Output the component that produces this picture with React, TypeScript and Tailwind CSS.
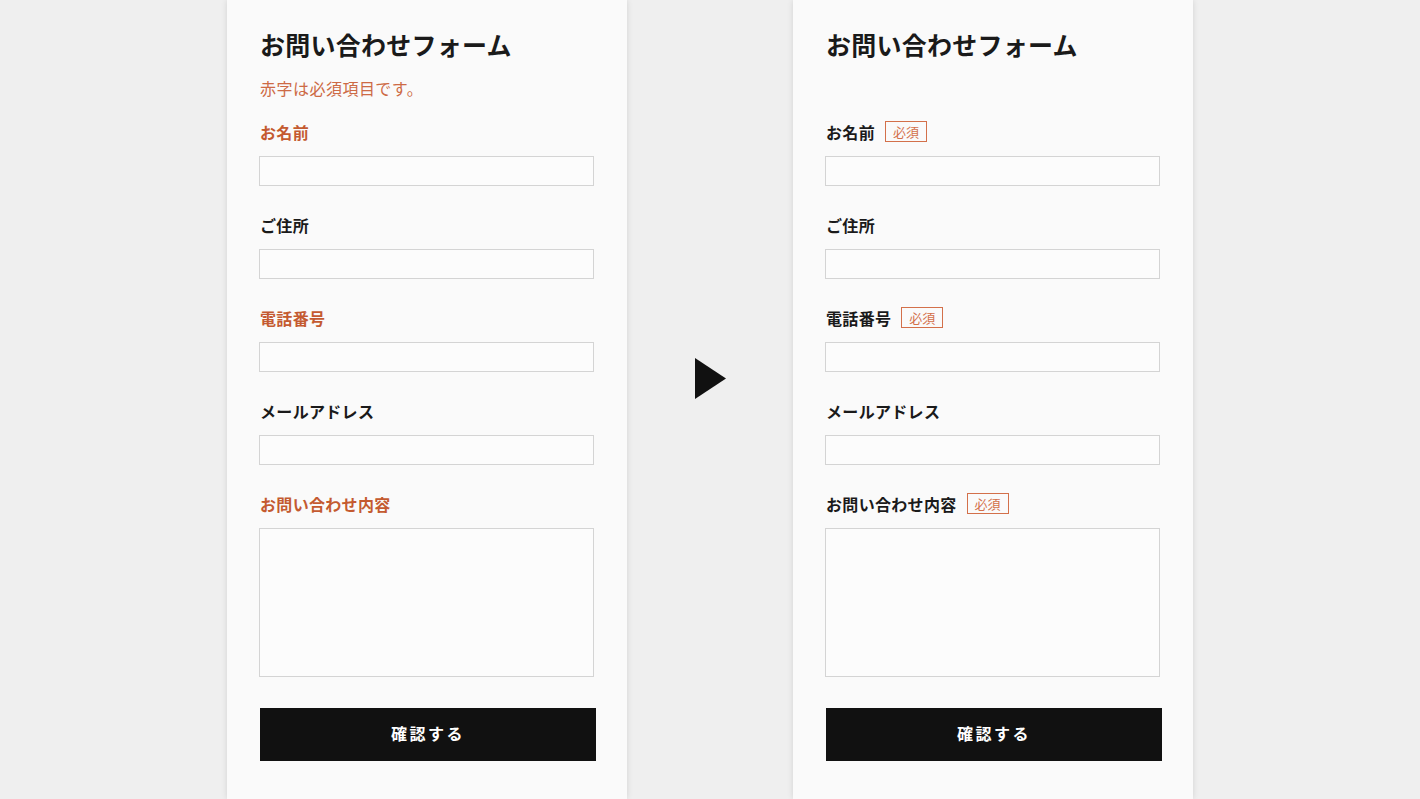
import React from 'react';

type Field = { label: string; required: boolean; multiline?: boolean };

const fields: Field[] = [
  { label: 'お名前', required: true },
  { label: 'ご住所', required: false },
  { label: '電話番号', required: true },
  { label: 'メールアドレス', required: false },
  { label: 'お問い合わせ内容', required: true, multiline: true },
];

function FormPanel({ variant }: { variant: 'color' | 'badge' }) {
  const isColor = variant === 'color';
  return (
    <div className="w-[400px] h-[799px] shrink-0 bg-[#fafafa] shadow-[0_0_6px_rgba(0,0,0,0.12)] pt-[27px] pl-[33px] pr-[31px]">
      <h1 className="text-[25px] leading-[34px] font-bold text-[#1a1a1a] tracking-[0.01em]">お問い合わせフォーム</h1>
      <p className={`mt-[15px] text-[16px] leading-[24px] tracking-[0.03em] text-[#cd6a45] ${isColor ? '' : 'invisible'}`}>
        赤字は必須項目です。
      </p>
      {fields.map((f, i) => (
        <div key={f.label} className={i === 0 ? 'mt-[20px]' : 'mt-[27px]'}>
          <div className="flex items-center h-[24px]">
            <span
              className={`text-[16px] leading-[24px] font-bold tracking-[0.02em] ${
                isColor && f.required ? 'text-[#c45a30]' : 'text-[#1a1a1a]'
              }`}
            >
              {f.label}
            </span>
            {!isColor && f.required && (
              <span className="ml-[10px] h-[21px] px-[7px] flex items-center border border-[#d3704a] text-[13px] leading-none text-[#d3704a] -mt-[2px]">
                必須
              </span>
            )}
          </div>
          {f.multiline ? (
            <textarea className="mt-[12px] -ml-[1px] block w-[335px] h-[149px] border border-[#d4d4d4] bg-[#fcfcfc] resize-none outline-none" />
          ) : (
            <input className="mt-[12px] -ml-[1px] block w-[335px] h-[30px] border border-[#d4d4d4] bg-[#fcfcfc] outline-none" />
          )}
        </div>
      ))}
      <button className="mt-[31px] w-[336px] h-[53px] bg-[#111111] text-white text-[16px] font-bold tracking-[0.16em] flex items-center justify-center pb-[4px]">
        確認する
      </button>
    </div>
  );
}

export default function App() {
  return (
    <div
      className="w-[1420px] h-[799px] bg-[#efefef] flex justify-center overflow-hidden"
      style={{ fontFamily: '"Noto Sans CJK JP", "Noto Sans", sans-serif' }}
    >
      <FormPanel variant="color" />
      <div className="w-[166px] shrink-0 flex items-center justify-center">
        <svg width="31" height="41" viewBox="0 0 31 41" className="ml-[1px] -mt-[42px]">
          <polygon points="0,0 31,20.5 0,41" fill="#111111" />
        </svg>
      </div>
      <FormPanel variant="badge" />
    </div>
  );
}
